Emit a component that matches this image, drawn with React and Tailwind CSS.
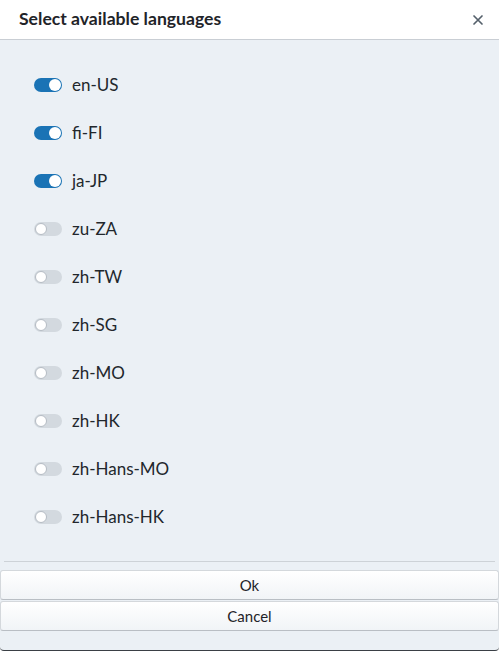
import { useState } from "react";

const LANGS = [
  { code: "en-US", on: true },
  { code: "fi-FI", on: true },
  { code: "ja-JP", on: true },
  { code: "zu-ZA", on: false },
  { code: "zh-TW", on: false },
  { code: "zh-SG", on: false },
  { code: "zh-MO", on: false },
  { code: "zh-HK", on: false },
  { code: "zh-Hans-MO", on: false },
  { code: "zh-Hans-HK", on: false },
];

// small pill switch, knob drawn as a circle
function Toggle({ on, onClick }) {
  return (
    <button
      type="button"
      onClick={onClick}
      className={`relative h-[14px] w-[28px] shrink-0 rounded-full ${on ? "bg-[#1a73b5]" : "bg-[#d3d9df]"}`}
    >
      <span
        className={`absolute top-[1px] h-[12px] w-[12px] rounded-full bg-white ${on ? "left-[15px]" : "left-[1px] border border-[#b5bcc4]"}`}
      />
    </button>
  );
}

export default function App() {
  const [langs, setLangs] = useState(LANGS);

  return (
    <div
      className="flex h-[651px] w-[499px] flex-col overflow-hidden rounded-b-[4px] border-b border-[#3a3f45] bg-[#ebf0f5] text-[#212529]"
      style={{ fontFamily: "Lato, 'Open Sans', sans-serif" }}
    >
      {/* Header */}
      <div className="flex h-[40px] shrink-0 items-center justify-between border-b border-[#c9ced4] bg-white pl-[19px] pr-[15px]">
        <span className="text-[17.6px] font-bold text-[#1f2429]">Select available languages</span>
        <svg width="12" height="12" viewBox="0 0 12 12" className="text-[#55606b]">
          <path d="M2 2 L10 10 M10 2 L2 10" stroke="currentColor" strokeWidth="1.7" strokeLinecap="round" />
        </svg>
      </div>

      {/* Language list */}
      <div className="flex flex-1 flex-col pt-[21px] pl-[34px]">
        {langs.map((l, i) => (
          <div key={l.code} className="flex h-12 items-center gap-[10px]">
            <Toggle
              on={l.on}
              onClick={() => setLangs(langs.map((x, j) => (j === i ? { ...x, on: !x.on } : x)))}
            />
            <span className="text-[17px] text-[#22272c]">{l.code}</span>
          </div>
        ))}
      </div>

      {/* Footer */}
      <div className="mx-[4px] border-t border-[#cdd2d7]" />
      <div className="flex flex-col gap-[1px] pt-[8px] pb-[19px]">
        <button
          type="button"
          className="h-[30px] rounded-[3px] border border-[#d4d8dc] border-b-[#b9bec4] bg-gradient-to-b from-white to-[#f1f4f7] text-[15px] text-[#1f2429]"
        >
          Ok
        </button>
        <button
          type="button"
          className="h-[30px] rounded-[3px] border border-[#d4d8dc] border-b-[#b9bec4] bg-gradient-to-b from-white to-[#f1f4f7] text-[15px] text-[#1f2429]"
        >
          Cancel
        </button>
      </div>
    </div>
  );
}
